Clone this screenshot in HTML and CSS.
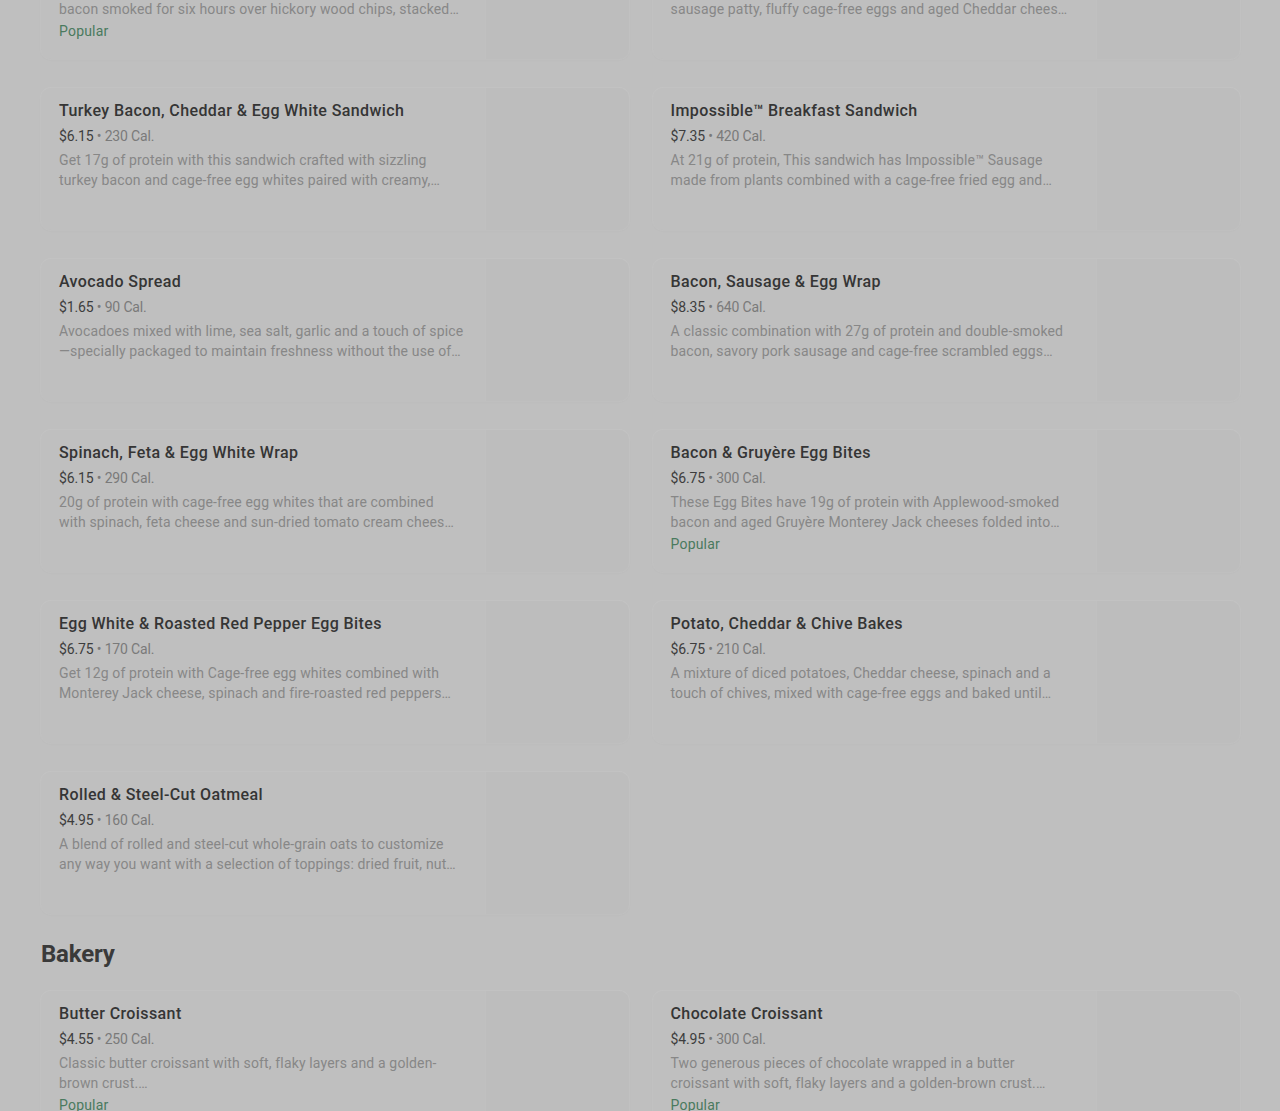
FILE: index.html
```html
<!DOCTYPE html>
<html lang="en">
<head>
    <meta charset="UTF-8">
    <meta name="viewport" content="width=device-width, initial-scale=1.0">
    <title>Menu</title>
    <link rel="stylesheet" href="styles.css">
</head>
<body>
    <main class="menu">
        <section class="section">
            <div class="grid">
                <div class="card">
                    <div class="info">
                        <h3>Double-Smoked Bacon, Cheddar &amp; Egg Sandwich</h3>
                        <p class="meta"><span class="price">$6.95</span> • 500 Cal.</p>
                        <p class="desc">Our twist on a classic with 21g of protein and double-smoked<br>bacon smoked for six hours over hickory wood chips, stacked…</p>
                        <p class="tag">Popular</p>
                    </div>
                    <div class="thumb"></div>
                </div>
                <div class="card">
                    <div class="info">
                        <h3>Sausage, Cheddar &amp; Egg Sandwich</h3>
                        <p class="meta"><span class="price">$5.45</span> • 480 Cal.</p>
                        <p class="desc">A classic breakfast sandwich with 15g of protein, a savory<br>sausage patty, fluffy cage-free eggs and aged Cheddar chees…</p>
                    </div>
                    <div class="thumb"></div>
                </div>

                <div class="card">
                    <div class="info">
                        <h3>Turkey Bacon, Cheddar &amp; Egg White Sandwich</h3>
                        <p class="meta"><span class="price">$6.15</span> • 230 Cal.</p>
                        <p class="desc">Get 17g of protein with this sandwich crafted with sizzling<br>turkey bacon and cage-free egg whites paired with creamy,…</p>
                    </div>
                    <div class="thumb"></div>
                </div>
                <div class="card">
                    <div class="info">
                        <h3>Impossible™ Breakfast Sandwich</h3>
                        <p class="meta"><span class="price">$7.35</span> • 420 Cal.</p>
                        <p class="desc">At 21g of protein, This sandwich has Impossible™ Sausage<br>made from plants combined with a cage-free fried egg and…</p>
                    </div>
                    <div class="thumb"></div>
                </div>

                <div class="card">
                    <div class="info">
                        <h3>Avocado Spread</h3>
                        <p class="meta"><span class="price">$1.65</span> • 90 Cal.</p>
                        <p class="desc">Avocadoes mixed with lime, sea salt, garlic and a touch of spice<br>—specially packaged to maintain freshness without the use of…</p>
                    </div>
                    <div class="thumb"></div>
                </div>
                <div class="card">
                    <div class="info">
                        <h3>Bacon, Sausage &amp; Egg Wrap</h3>
                        <p class="meta"><span class="price">$8.35</span> • 640 Cal.</p>
                        <p class="desc">A classic combination with 27g of protein and double-smoked<br>bacon, savory pork sausage and cage-free scrambled eggs…</p>
                    </div>
                    <div class="thumb"></div>
                </div>

                <div class="card">
                    <div class="info">
                        <h3>Spinach, Feta &amp; Egg White Wrap</h3>
                        <p class="meta"><span class="price">$6.15</span> • 290 Cal.</p>
                        <p class="desc">20g of protein with cage-free egg whites that are combined<br>with spinach, feta cheese and sun-dried tomato cream chees…</p>
                    </div>
                    <div class="thumb"></div>
                </div>
                <div class="card">
                    <div class="info">
                        <h3>Bacon &amp; Gruyère Egg Bites</h3>
                        <p class="meta"><span class="price">$6.75</span> • 300 Cal.</p>
                        <p class="desc">These Egg Bites have 19g of protein with Applewood-smoked<br>bacon and aged Gruyère Monterey Jack cheeses folded into…</p>
                        <p class="tag">Popular</p>
                    </div>
                    <div class="thumb"></div>
                </div>

                <div class="card">
                    <div class="info">
                        <h3>Egg White &amp; Roasted Red Pepper Egg Bites</h3>
                        <p class="meta"><span class="price">$6.75</span> • 170 Cal.</p>
                        <p class="desc">Get 12g of protein with Cage-free egg whites combined with<br>Monterey Jack cheese, spinach and fire-roasted red peppers…</p>
                    </div>
                    <div class="thumb"></div>
                </div>
                <div class="card">
                    <div class="info">
                        <h3>Potato, Cheddar &amp; Chive Bakes</h3>
                        <p class="meta"><span class="price">$6.75</span> • 210 Cal.</p>
                        <p class="desc">A mixture of diced potatoes, Cheddar cheese, spinach and a<br>touch of chives, mixed with cage-free eggs and baked until…</p>
                    </div>
                    <div class="thumb"></div>
                </div>

                <div class="card">
                    <div class="info">
                        <h3>Rolled &amp; Steel-Cut Oatmeal</h3>
                        <p class="meta"><span class="price">$4.95</span> • 160 Cal.</p>
                        <p class="desc">A blend of rolled and steel-cut whole-grain oats to customize<br>any way you want with a selection of toppings: dried fruit, nut…</p>
                    </div>
                    <div class="thumb"></div>
                </div>
            </div>
        </section>

        <section class="section">
            <h2>Bakery</h2>
            <div class="grid">
                <div class="card">
                    <div class="info">
                        <h3>Butter Croissant</h3>
                        <p class="meta"><span class="price">$4.55</span> • 250 Cal.</p>
                        <p class="desc">Classic butter croissant with soft, flaky layers and a golden-<br>brown crust.…</p>
                        <p class="tag">Popular</p>
                    </div>
                    <div class="thumb"></div>
                </div>
                <div class="card">
                    <div class="info">
                        <h3>Chocolate Croissant</h3>
                        <p class="meta"><span class="price">$4.95</span> • 300 Cal.</p>
                        <p class="desc">Two generous pieces of chocolate wrapped in a butter<br>croissant with soft, flaky layers and a golden-brown crust.…</p>
                        <p class="tag">Popular</p>
                    </div>
                    <div class="thumb"></div>
                </div>
            </div>
        </section>
    </main>
</body>
</html>
```

FILE: styles.css
```css
body {
    margin: 0;
    background: #bfbfbf;
    font-family: Roboto, "Liberation Sans", Arial, sans-serif;
    color: #333;
    height: 1111px;
    overflow: hidden;
}
.menu {
    padding: 0 40px 0 41px;
    margin-top: -83px;
}
.grid {
    display: grid;
    grid-template-columns: 1fr 1fr;
    column-gap: 24px;
    row-gap: 29px;
}
.section h2 {
    margin: 24px 0 21px;
    font-size: 24px;
    line-height: 32px;
    font-weight: 700;
    color: #3a3a3a;
    letter-spacing: -0.2px;
}
.card {
    display: flex;
    height: 142px;
    border-radius: 10px;
    background: #bfbfbf;
    box-shadow: 0 0 0 1px rgba(255, 255, 255, 0.07), 0 1px 3px rgba(0, 0, 0, 0.03);
    overflow: hidden;
}
.info {
    flex: 1;
    padding: 13px 18px 0;
}
.thumb {
    width: 144px;
    background: #bdbdbd;
    box-shadow: inset 1px 0 0 rgba(255, 255, 255, 0.06);
}
.info h3 {
    margin: 0;
    font-size: 16px;
    line-height: 20px;
    font-weight: 500;
    color: #353535;
    letter-spacing: 0.4px;
}
.meta {
    margin: 5px 0 0;
    font-size: 14px;
    line-height: 20px;
    color: #7a7a7a;
    letter-spacing: -0.15px;
}
.price { color: #3d3d3d; }
.desc {
    margin: 4px 0 0;
    font-size: 14px;
    line-height: 20px;
    color: #878787;
    letter-spacing: 0.15px;
    white-space: nowrap;
}
.tag {
    margin: 2px 0 0;
    font-size: 14px;
    line-height: 20px;
    color: #4a7a5e;
    letter-spacing: 0.2px;
}
```
